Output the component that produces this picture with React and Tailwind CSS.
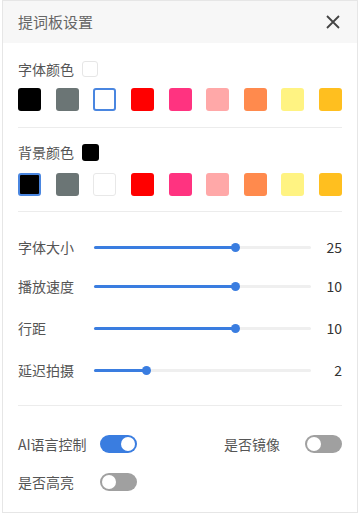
const font = { fontFamily: '"Noto Sans CJK SC", "Noto Sans", sans-serif' };

const colors = ['#000000', '#6b7575', '#ffffff', '#ff0000', '#ff3380', '#ffa8a8', '#ff8a4d', '#fff382', '#ffbf1f'];

function Swatches({ selected }) {
  return (
    <div className="flex justify-between">
      {colors.map((c, i) => (
        <div
          key={c}
          className={
            'w-[23px] h-[23px] rounded-[3px] ' +
            (i === selected ? 'border-2 border-[#4a86e0]' : c === '#ffffff' ? 'border border-[#e8e8e8]' : '')
          }
          style={{ backgroundColor: c }}
        />
      ))}
    </div>
  );
}

function SliderRow({ label, value, pct, className }) {
  return (
    <div className={'flex items-center ' + className}>
      <span className="w-[76px] text-[14px] text-[#555]">{label}</span>
      <div className="relative w-[217px] h-[3px] bg-[#efefef] rounded-full">
        <div className="absolute left-0 top-0 h-[3px] bg-[#3a7de0] rounded-full" style={{ width: pct + '%' }} />
        <div
          className="absolute top-1/2 w-[9px] h-[9px] -mt-[4.5px] -ml-[4.5px] rounded-full bg-[#3a7de0]"
          style={{ left: pct + '%' }}
        />
      </div>
      <span className="flex-1 text-right text-[14px] text-[#333]">{value}</span>
    </div>
  );
}

function Toggle({ on }) {
  return (
    <div
      className={
        'w-[37px] h-[18px] rounded-full p-[2px] flex items-center ' +
        (on ? 'bg-[#3a7de0] justify-end' : 'bg-[#a0a0a0] justify-start')
      }
    >
      <div className="w-[14px] h-[14px] rounded-full bg-white" />
    </div>
  );
}

export default function App() {
  return (
    <div className="w-[360px] h-[514px] bg-white" style={font}>
      <div className="h-[513px] mx-[2px] border border-[#e6e6e6] bg-white">
        {/* Header */}
        <div className="h-[42px] bg-[#f7f7f7] flex items-center justify-between pl-[15px] pr-[17px]">
          <span className="text-[15px] text-[#666]">提词板设置</span>
          <svg className="w-[14px] h-[14px]" viewBox="0 0 14 14" fill="none" stroke="#444" strokeWidth="1.8">
            <path d="M1 1l12 12M13 1L1 13" />
          </svg>
        </div>

        <div className="px-[15px]">
          {/* Font color */}
          <div className="flex items-center mt-[17px] h-[18px]">
            <span className="text-[14px] text-[#555]">字体颜色</span>
            <div className="ml-[8px] w-[16px] h-[16px] rounded-[3px] border border-[#e6e6e6] bg-white" />
          </div>
          <div className="mt-[10px]">
            <Swatches selected={2} />
          </div>
          <div className="mt-[16px] h-px bg-[#ececec]" />

          {/* Background color */}
          <div className="flex items-center mt-[15px] h-[18px]">
            <span className="text-[14px] text-[#555]">背景颜色</span>
            <div className="ml-[8px] w-[17px] h-[17px] rounded-[3px] bg-black" />
          </div>
          <div className="mt-[12px]">
            <Swatches selected={0} />
          </div>
          <div className="mt-[15px] h-px bg-[#ececec]" />

          {/* Sliders */}
          <SliderRow label="字体大小" value="25" pct={65} className="mt-[25px] h-[20px]" />
          <SliderRow label="播放速度" value="10" pct={65} className="mt-[19px] h-[20px]" />
          <SliderRow label="行距" value="10" pct={65} className="mt-[22px] h-[20px]" />
          <SliderRow label="延迟拍摄" value="2" pct={24} className="mt-[22px] h-[20px]" />

          <div className="mt-[25px] h-px bg-[#ececec]" />

          {/* Toggles */}
          <div className="flex items-center mt-[28px] h-[20px]">
            <span className="w-[82px] text-[14px] text-[#555]">AI语言控制</span>
            <Toggle on />
            <span className="ml-[87px] w-[81px] text-[14px] text-[#555]">是否镜像</span>
            <Toggle />
          </div>
          <div className="flex items-center mt-[18px] h-[20px]">
            <span className="w-[82px] text-[14px] text-[#555]">是否高亮</span>
            <Toggle />
          </div>
        </div>
      </div>
    </div>
  );
}
